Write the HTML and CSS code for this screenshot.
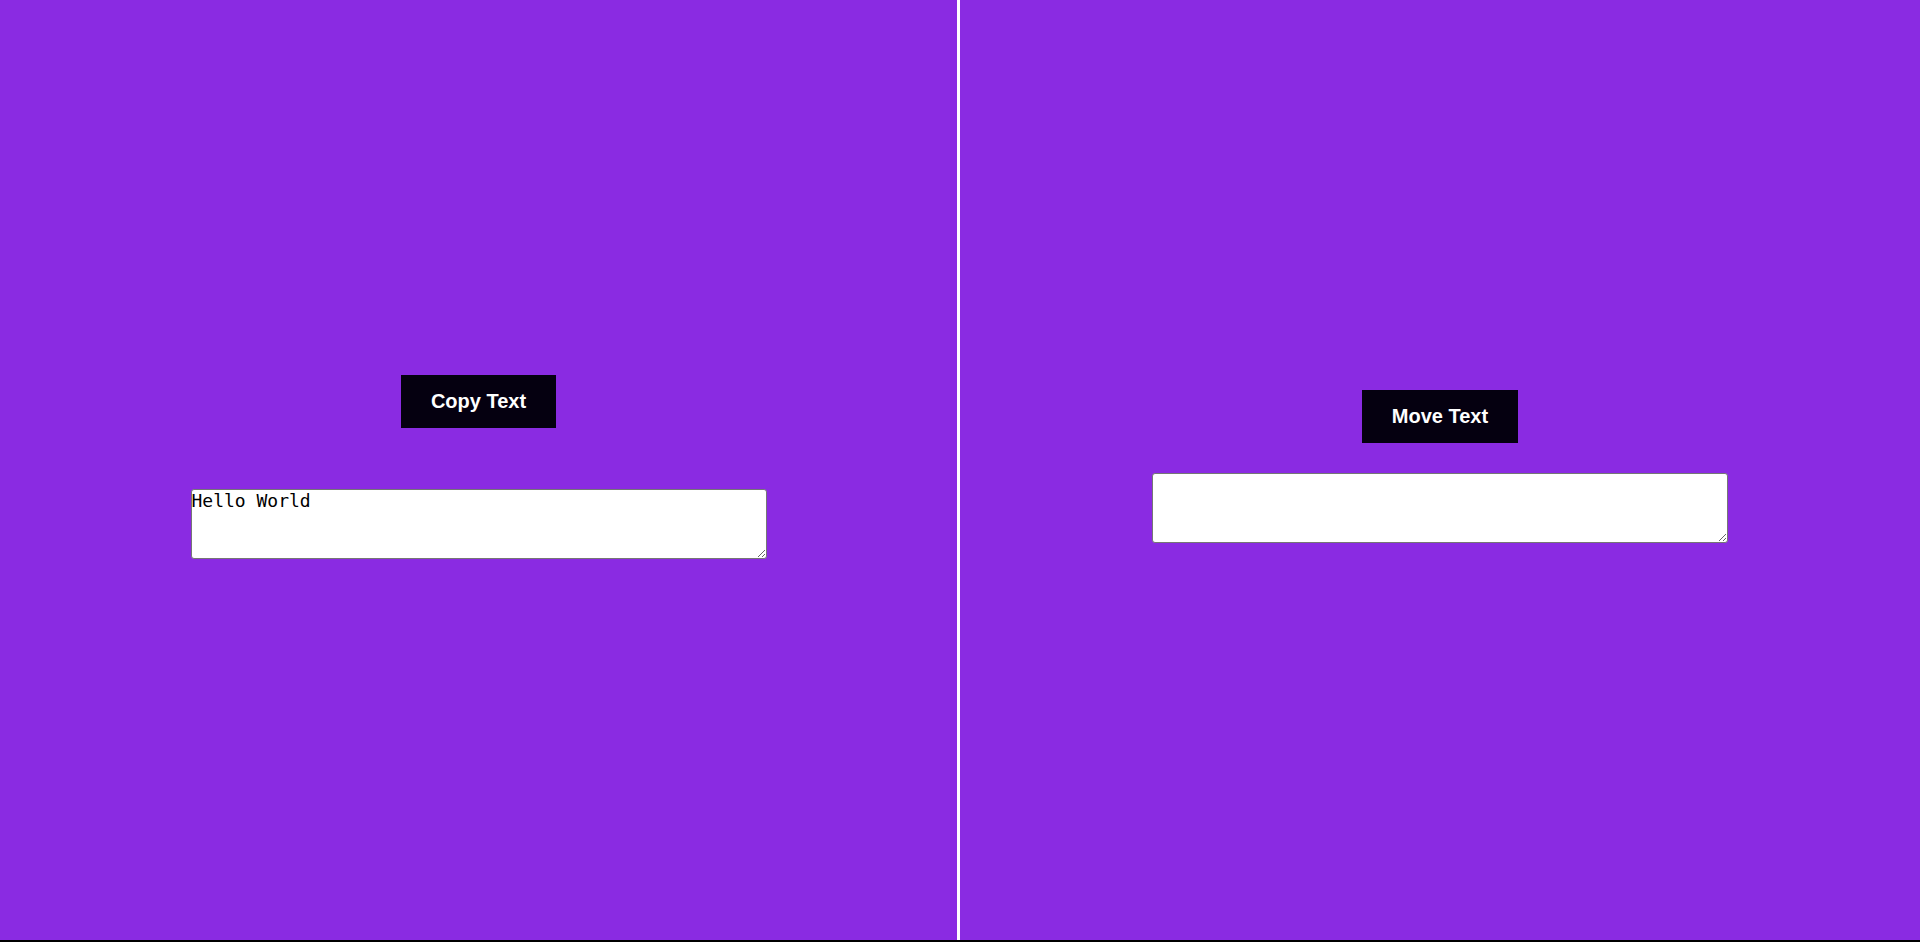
FILE: index.html
```html
<!DOCTYPE html>
<html>
<head>
<meta charset="utf-8">
<link rel="stylesheet" href="styles.css">
</head>
<body>
<div class="split">
  <section class="panel panel-left">
    <button class="btn">Copy Text</button>
    <textarea class="box box-left">Hello World</textarea>
  </section>
  <section class="panel panel-right">
    <button class="btn">Move Text</button>
    <textarea class="box box-right"></textarea>
  </section>
</div>
</body>
</html>
```
FILE: styles.css
```css
html {
  background: #000;
}
body {
  margin: 0;
  font-family: "Liberation Sans", Arial, sans-serif;
}
.split {
  display: flex;
  height: 940px;
  background: #8a2be2;
}
.panel {
  display: flex;
  flex-direction: column;
  align-items: center;
  justify-content: center;
  padding-bottom: 7px;
  box-sizing: border-box;
  min-width: 0;
}
.panel-left {
  flex: 0 0 957px;
  border-right: 3px solid #fff;
  box-sizing: content-box;
}
.panel-right {
  flex: 1 1 0;
}
.btn {
  background: #050010;
  color: #fff;
  border: none;
  font-family: "Liberation Sans", Arial, sans-serif;
  font-weight: bold;
  font-size: 20px;
  line-height: 23px;
  padding: 15px 30px;
  cursor: pointer;
}
.box {
  width: 576px;
  height: 70px;
  box-sizing: border-box;
  padding: 0;
  border: 1px solid #767676;
  border-radius: 3px;
  background: #fff;
  font-family: "DejaVu Sans Mono", monospace;
  font-size: 18px;
  color: #000;
  flex-shrink: 0;
}
.box-left {
  margin-top: 61px;
}
.box-right {
  margin-top: 30px;
}
```
